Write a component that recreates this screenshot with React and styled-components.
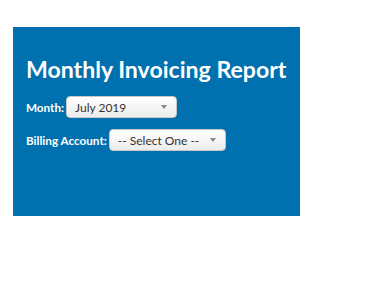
import React from 'react';
import styled, { createGlobalStyle } from 'styled-components';

const GlobalStyle = createGlobalStyle`
  body {
    margin: 0;
    background: #fff;
    font-family: Lato, "Open Sans", sans-serif;
  }
`;

const Panel = styled.div`
  margin: 27px 0 0 13px;
  width: 287px;
  height: 189px;
  box-sizing: border-box;
  background: #0071ae;
  padding: 28px 12px 0 13px;
  color: #fff;
`;

const Title = styled.h1`
  margin: 0 0 13px 0;
  font-size: 23.1px;
  font-weight: 700;
  white-space: nowrap;
`;

const Row = styled.div`
  display: flex;
  align-items: center;
  gap: 2px;
  margin-bottom: 11px;
`;

const Label = styled.span`
  font-size: 11.7px;
  font-weight: 700;
`;

const Select = styled.div`
  display: flex;
  align-items: center;
  justify-content: space-between;
  box-sizing: border-box;
  width: ${p => p.w}px;
  height: 22px;
  padding: 0 9px 0 8px;
  border-radius: 4px;
  border: 1px solid #c8c8c8;
  background: linear-gradient(#ffffff, #ececec);
  color: #333;
  font-size: 12px;
`;

const Arrow = styled.span`
  width: 0;
  height: 0;
  border-left: 3px solid transparent;
  border-right: 3px solid transparent;
  border-top: 4px solid #888;
`;

const Dropdown = ({ w, value }) => (
  <Select w={w}>
    <span>{value}</span>
    <Arrow />
  </Select>
);

export default function App() {
  return (
    <>
      <GlobalStyle />
      <Panel>
        <Title>Monthly Invoicing Report</Title>
        <Row>
          <Label>Month:</Label>
          <Dropdown w={111} value="July 2019" />
        </Row>
        <Row>
          <Label>Billing Account:</Label>
          <Dropdown w={117} value="-- Select One --" />
        </Row>
      </Panel>
    </>
  );
}
